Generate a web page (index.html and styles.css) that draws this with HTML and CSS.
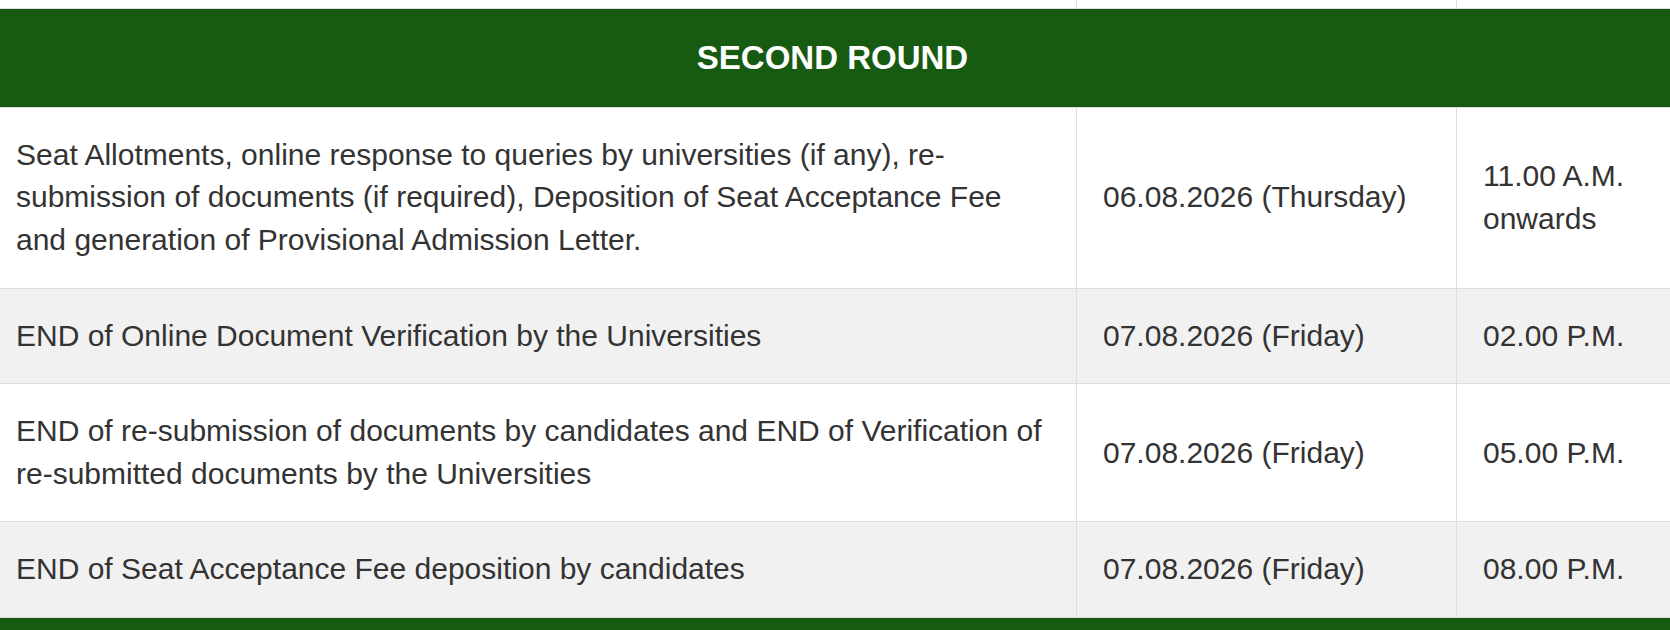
FILE: index.html
```html
<!DOCTYPE html>
<html lang="en">
<head>
<meta charset="utf-8">
<title>Schedule - Second Round</title>
<link rel="stylesheet" href="styles.css">
</head>
<body>
<div class="page">
<table class="schedule">
  <colgroup>
    <col class="c-event">
    <col class="c-date">
    <col class="c-time">
  </colgroup>
  <tbody>
    <tr class="prev-row"><td></td><td></td><td></td></tr>
    <tr class="round-head"><th colspan="3">SECOND ROUND</th></tr>
    <tr>
      <td>Seat Allotments, online response to queries by universities (if any), re-submission of documents (if required), Deposition of Seat Acceptance Fee and generation of Provisional Admission Letter.</td>
      <td>06.08.2026 (Thursday)</td>
      <td>11.00 A.M. onwards</td>
    </tr>
    <tr class="alt">
      <td>END of Online Document Verification by the Universities</td>
      <td>07.08.2026 (Friday)</td>
      <td>02.00 P.M.</td>
    </tr>
    <tr>
      <td>END of re-submission of documents by candidates and END of Verification of re-submitted documents by the Universities</td>
      <td>07.08.2026 (Friday)</td>
      <td>05.00 P.M.</td>
    </tr>
    <tr class="alt">
      <td>END of Seat Acceptance Fee deposition by candidates</td>
      <td>07.08.2026 (Friday)</td>
      <td>08.00 P.M.</td>
    </tr>
    <tr class="round-head"><th colspan="3">&nbsp;</th></tr>
  </tbody>
</table>
</div>
</body>
</html>
```

FILE: styles.css
```css
html, body {
  margin: 0;
  padding: 0;
  background: #ffffff;
}

body {
  font-family: "Liberation Sans", Arial, sans-serif;
  color: #333333;
  overflow: hidden;
}

.page {
  width: 1670px;
  height: 630px;
  overflow: hidden;
}

.schedule {
  margin-left: -11px;
  width: 1686px;
  border-collapse: collapse;
  table-layout: fixed;
}

.c-event { width: 1087px; }
.c-date { width: 380px; }
.c-time { width: 219px; }

.schedule td {
  padding: 26px;
  font-size: 30px;
  line-height: 1.42;
  vertical-align: middle;
  text-align: left;
  border: 1px solid #dddddd;
  background: #ffffff;
}

.schedule tr.alt td {
  background: #f1f1f1;
}

.schedule tr.prev-row td {
  padding: 0;
  height: 8px;
  border-top: none;
}

.round-head th {
  background: #175a12;
  color: #ffffff;
  font-size: 33px;
  font-weight: bold;
  line-height: 1.42;
  padding: 26px 26px 25px;
  text-align: center;
  border: 1px solid #dddddd;
}
```
